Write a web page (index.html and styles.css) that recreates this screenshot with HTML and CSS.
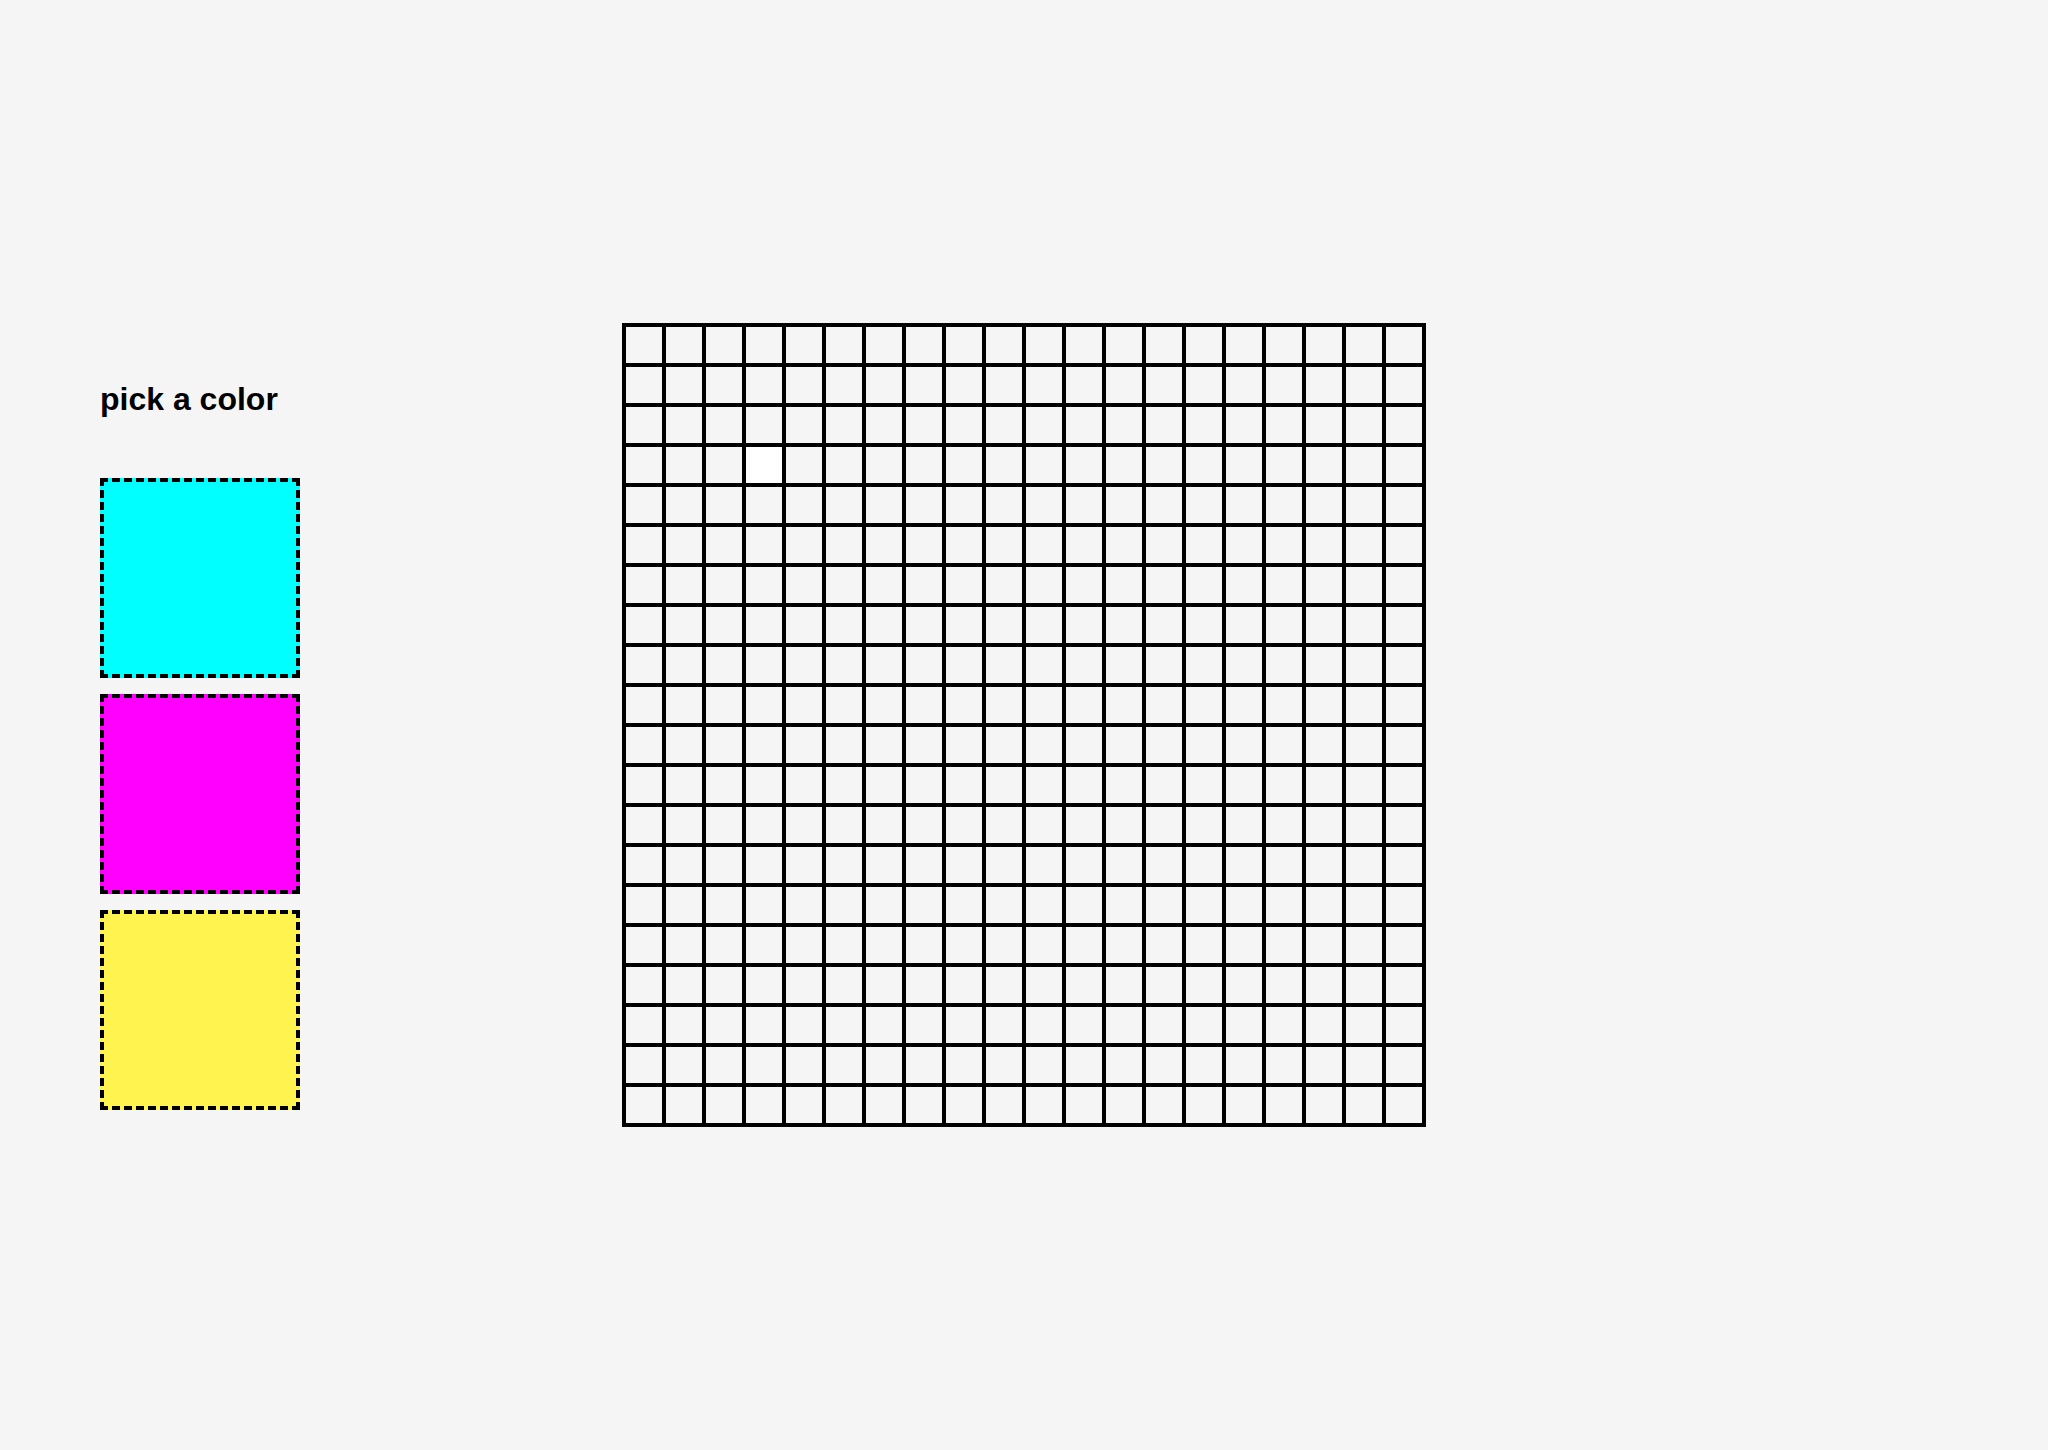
FILE: index.html
```html
<!DOCTYPE html>
<html>
<head>
	<title>pixel painter</title>
	<link rel="stylesheet" href="styles.css">
</head>
<body>
	<div id="app">
		<div id="palette">
			<h1>pick a color</h1>
			<div class="swatch cyan"></div>
			<div class="swatch magenta"></div>
			<div class="swatch yellow"></div>
		</div>
		<div id="canvas"></div>
	</div>
	<script>
		const canvas = document.getElementById('canvas');
		for (let i = 0; i < 400; i++) {
			const cell = document.createElement('div');
			cell.className = 'cell';
			if (i === 63) cell.classList.add('hover');
			canvas.appendChild(cell);
		}
	</script>
</body>
</html>
```

FILE: styles.css
```css
html {
	background: #f5f5f5;
}

body {
	margin: 0;
	font-family: 'Liberation Sans', Arial, sans-serif;
	color: #000;
}

#app {
	display: grid;
	grid-template-columns: 1fr auto 1fr;
	align-items: center;
	height: 100vh;
}

#palette {
	align-self: start;
	padding-top: 381px;
	padding-left: 100px;
	display: flex;
	flex-direction: column;
	gap: 16px;
}

#palette h1 {
	font-size: 32px;
	line-height: 37px;
	margin: 0 0 44px 0;
}

.swatch {
	width: 200px;
	height: 200px;
	box-sizing: border-box;
	border: 4px dashed #000;
}
.swatch.cyan { background-color: #00ffff; }
.swatch.magenta { background-color: #ff00ff; }
.swatch.yellow { background-color: #fff44f; }

#canvas {
	display: grid;
	grid-template-columns: repeat(20, 40px);
	grid-auto-rows: 40px;
	border: 2px solid #000;
}

.cell {
	box-sizing: border-box;
	border: 2px solid #000;
	background-color: #f5f5f5;
}
.cell.hover {
	background-color: #fff;
}
```
